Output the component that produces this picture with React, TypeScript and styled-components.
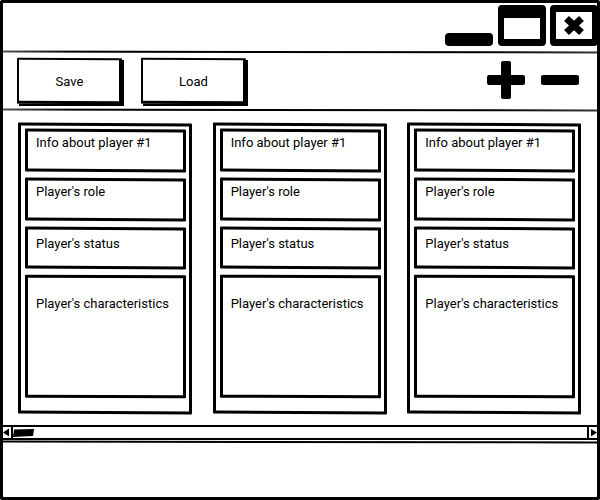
import React from "react";
import styled, { createGlobalStyle, css } from "styled-components";

const INK = "#000";

const GlobalStyle = createGlobalStyle`
  *, *::before, *::after { box-sizing: border-box; }
  body {
    margin: 0;
    background: #fff;
    color: ${INK};
    font-family: Roboto, "Open Sans", sans-serif;
    font-size: 13px;
    line-height: 16px;
  }
  button { font: inherit; color: inherit; }
`;

/* A pen-drawn outline: the border leans a little, the content stays straight. */
const penOutline = css<{ $lean?: number }>`
  position: relative;
  &::before {
    content: "";
    position: absolute;
    inset: 0;
    border: 3px solid ${INK};
    border-radius: 1px;
    transform: skewY(${(p) => p.$lean ?? 0.3}deg);
    pointer-events: none;
  }
`;

const Window = styled.div`
  display: flex;
  flex-direction: column;
  min-height: 100vh;
  border: 3px solid ${INK};
  border-radius: 2px;
`;

const penRule = css`
  position: relative;
  &::after {
    content: "";
    position: absolute;
    left: 0;
    right: 0;
    bottom: 0;
    height: 2px;
    background: linear-gradient(to right, #555, ${INK} 12%, ${INK} 80%, #333);
    transform: skewY(0.1deg);
  }
`;

const TitleBar = styled.header`
  ${penRule}
  display: flex;
  justify-content: flex-end;
  align-items: flex-start;
  gap: 4px;
  height: 50px;
  padding-top: 2px;
`;

const Toolbar = styled.div`
  ${penRule}
  display: flex;
  align-items: flex-start;
  gap: 16px;
  height: 58px;
  padding: 5px 18px 0 14px;
`;

const IconButton = styled.button`
  display: block;
  flex: none;
  padding: 0;
  border: 0;
  background: none;
  cursor: pointer;
  svg { display: block; }
`;

const ToolGroup = styled.div<{ $push?: boolean; $gap: number }>`
  display: flex;
  align-items: center;
  gap: ${(p) => p.$gap}px;
  margin-left: ${(p) => (p.$push ? "auto" : "0")};
`;

const PushButton = styled.button`
  ${penOutline}
  width: 105px;
  height: 46px;
  padding: 2px 0 0;
  border: 0;
  background: #fff;
  box-shadow: 2px 2px 0 ${INK};
  cursor: pointer;
  &::before { border-width: 2px 3px 3px 2px; }
`;

const Board = styled.main`
  display: grid;
  grid-template-columns: repeat(3, minmax(0, 1fr));
  gap: 21px;
  padding: 12px 16px 11px 15px;
`;

const PlayerCard = styled.article`
  ${penOutline}
  display: flex;
  flex-direction: column;
  gap: 6px;
  padding: 6px 6px 16px 7px;
`;

const Field = styled.section<{ $height: number; $top: number; $lean?: number }>`
  ${penOutline}
  min-height: ${(p) => p.$height}px;
  padding: ${(p) => p.$top}px 8px 5px 11px;
  white-space: nowrap;
`;

const ScrollBar = styled.div`
  display: flex;
  height: 15px;
  border-top: 2px solid ${INK};
  border-bottom: 2px solid ${INK};
`;

const ScrollTrack = styled.div`
  flex: 1;
  display: flex;
  align-items: center;
  border: solid ${INK};
  border-width: 0 2px;
`;

const StatusBar = styled.footer`
  flex: 1;
  min-height: 40px;
  margin-top: 1px;
  position: relative;
  &::before {
    content: "";
    position: absolute;
    inset: 0 0 auto;
    height: 2px;
    background: ${INK};
    transform: skewY(0.1deg);
  }
`;

const FIELDS = [
  { text: "Info about player #1", height: 43, top: 6 },
  { text: "Player's role", height: 43, top: 6 },
  { text: "Player's status", height: 42, top: 9 },
  { text: "Player's characteristics", height: 123, top: 21, lean: 0.2 },
];

export default function App() {
  return (
    <>
      <GlobalStyle />
      <Window>
        <TitleBar>
          <IconButton aria-label="Minimize">
            <svg width="49" height="42" viewBox="0 0 49 42">
              <rect x="0" y="28" width="48" height="13" rx="4" />
            </svg>
          </IconButton>
          <IconButton aria-label="Maximize">
            <svg width="48" height="42" viewBox="0 0 48 42">
              <path
                fillRule="evenodd"
                d="M4 0H44Q48 0 48 4V37Q48 41 44 41H4Q0 41 0 37V4Q0 0 4 0ZM6 13V34H42V13Z"
              />
            </svg>
          </IconButton>
          <IconButton aria-label="Close">
            <svg width="47" height="42" viewBox="0 0 47 42">
              <path
                fillRule="evenodd"
                d="M4 0H44Q48 0 48 4V37Q48 41 44 41H4Q0 41 0 37V4Q0 0 4 0ZM6 7V34H42V7Z"
              />
              <path
                d="M16.500 13.500L31.500 27.500M31.500 13.500L16.500 27.500"
                stroke={INK}
                strokeWidth="7"
              />
            </svg>
          </IconButton>
        </TitleBar>

        <Toolbar>
          <ToolGroup $gap={19}>
            <PushButton>Save</PushButton>
            <PushButton>Load</PushButton>
          </ToolGroup>
          <ToolGroup $push $gap={16}>
            <IconButton aria-label="Add player">
              <svg width="38" height="44" viewBox="0 0 38 44">
                <rect x="0" y="17" width="38" height="10" rx="2" />
                <rect x="14" y="3" width="10" height="38" rx="2" />
              </svg>
            </IconButton>
            <IconButton aria-label="Remove player">
              <svg width="38" height="44" viewBox="0 0 38 44">
                <rect x="0" y="17" width="38" height="10" rx="2" />
              </svg>
            </IconButton>
          </ToolGroup>
        </Toolbar>

        <Board>
          {[0, 1, 2].map((player) => (
            <PlayerCard key={player}>
              {FIELDS.map((f) => (
                <Field key={f.text} $height={f.height} $top={f.top} $lean={f.lean}>
                  {f.text}
                </Field>
              ))}
            </PlayerCard>
          ))}
        </Board>

        <ScrollBar>
          <IconButton aria-label="Scroll left">
            <svg width="8" height="11" viewBox="0 0 8 11">
              <path d="M0 5.500L6 1.500V9.500Z" />
            </svg>
          </IconButton>
          <ScrollTrack>
            <svg width="21" height="8" viewBox="0 0 21 8">
              <path d="M1 .5L21 0L20 7L9 7.500L0 8Z" />
            </svg>
          </ScrollTrack>
          <IconButton aria-label="Scroll right">
            <svg width="8" height="11" viewBox="0 0 8 11">
              <path d="M2 2L8 5.500L2 9.500Z" />
            </svg>
          </IconButton>
        </ScrollBar>

        <StatusBar />
      </Window>
    </>
  );
}
